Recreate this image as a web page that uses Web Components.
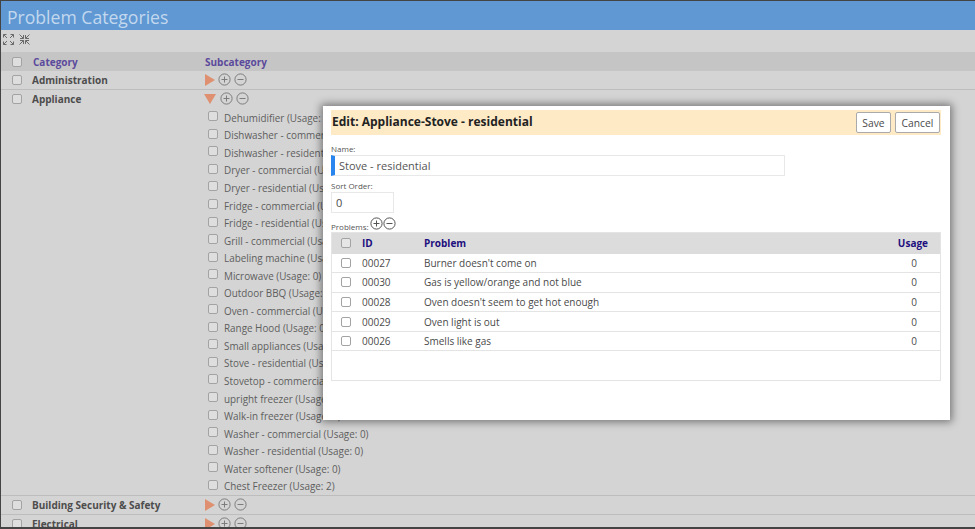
<!DOCTYPE html>
<html>
<head>
<meta charset="utf-8">
<title>Problem Categories</title>
<style>
    html, body { margin: 0; height: 100%; overflow: hidden; background: #d4d4d4; }
    body { font-family: "Open Sans", "Liberation Sans", sans-serif; color: #555; }
</style>
</head>
<body>
<category-page>
    <cat-row name="Administration"></cat-row>
    <cat-row name="Appliance" open>
        <sub-item>Dehumidifier (Usage: 0)</sub-item>
        <sub-item>Dishwasher - commercial (Usage: 0)</sub-item>
        <sub-item>Dishwasher - residential (Usage: 0)</sub-item>
        <sub-item>Dryer - commercial (Usage: 0)</sub-item>
        <sub-item>Dryer - residential (Usage: 0)</sub-item>
        <sub-item>Fridge - commercial (Usage: 0)</sub-item>
        <sub-item>Fridge - residential (Usage: 0)</sub-item>
        <sub-item>Grill - commercial (Usage: 0)</sub-item>
        <sub-item>Labeling machine (Usage: 0)</sub-item>
        <sub-item>Microwave (Usage: 0)</sub-item>
        <sub-item>Outdoor BBQ (Usage: 0)</sub-item>
        <sub-item>Oven - commercial (Usage: 0)</sub-item>
        <sub-item>Range Hood (Usage: 0)</sub-item>
        <sub-item>Small appliances (Usage: 0)</sub-item>
        <sub-item>Stove - residential (Usage: 0)</sub-item>
        <sub-item>Stovetop - commercial (Usage: 0)</sub-item>
        <sub-item>upright freezer (Usage: 0)</sub-item>
        <sub-item>Walk-in freezer (Usage: 0)</sub-item>
        <sub-item>Washer - commercial (Usage: 0)</sub-item>
        <sub-item>Washer - residential (Usage: 0)</sub-item>
        <sub-item>Water softener (Usage: 0)</sub-item>
        <sub-item>Chest Freezer (Usage: 2)</sub-item>
    </cat-row>
    <cat-row name="Building Security &amp; Safety"></cat-row>
    <cat-row name="Electrical"></cat-row>
</category-page>
<edit-dialog title-text="Edit: Appliance-Stove - residential">
    <problem-row code="00027" usage="0">Burner doesn't come on</problem-row>
    <problem-row code="00030" usage="0">Gas is yellow/orange and not blue</problem-row>
    <problem-row code="00028" usage="0">Oven doesn't seem to get hot enough</problem-row>
    <problem-row code="00029" usage="0">Oven light is out</problem-row>
    <problem-row code="00026" usage="0">Smells like gas</problem-row>
</edit-dialog>

<script>
const CHECK_CSS = `
    .check {
        display: block;
        box-sizing: border-box;
        width: 10px;
        height: 10px;
        border: 1px solid #a3a3a3;
        border-radius: 2px;
        background: #dedede;
        flex: none;
    }
`;

class RoundIcon extends HTMLElement {
    connectedCallback() {
        const minus = this.getAttribute('type') === 'minus';
        const color = this.getAttribute('color') || '#7c7c7c';
        this.attachShadow({ mode: 'open' });
        this.shadowRoot.innerHTML = `
            <style>
                :host { display: block; width: 13px; height: 13px; flex: none; }
                svg { display: block; }
            </style>
            <svg width="13" height="13" viewBox="0 0 13 13" fill="none" stroke="${color}" stroke-width="1">
                <circle cx="6.5" cy="6.5" r="5.6"/>
                <path d="M3.5 6.5h6${minus ? '' : 'M6.5 3.5v6'}"/>
            </svg>
        `;
    }
}

class CategoryPage extends HTMLElement {
    connectedCallback() {
        this.attachShadow({ mode: 'open' });
        this.shadowRoot.innerHTML = `
            <style>
                :host {
                    display: block;
                    box-sizing: border-box;
                    height: 529px;
                    overflow: hidden;
                    border: solid #444;
                    border-width: 1px 0 2px 1px;
                }
                .title {
                    box-sizing: border-box;
                    height: 29px;
                    background: #5f98d2;
                    color: #c3d8ef;
                    font-size: 17.6px;
                    line-height: 29px;
                    padding: 2px 0 0 6px;
                    overflow: hidden;
                }
                .tools {
                    height: 22px;
                    display: flex;
                    align-items: center;
                    gap: 5px;
                    padding: 0 0 3px 2px;
                    box-sizing: border-box;
                }
                .head {
                    height: 19px;
                    background: #c5c5c5;
                    display: flex;
                    align-items: center;
                    font-size: 10px;
                    font-weight: 700;
                    color: #5b4a9c;
                }
                ${CHECK_CSS}
                .head .check { margin-left: 11px; }
                .head .cat { margin-left: 11px; width: 172px; }
            </style>
            <div class="title">Problem Categories</div>
            <div class="tools">
                <svg width="11" height="11" viewBox="0 0 11 11" fill="none" stroke="#6a6a6a" stroke-width="1">
                    <path d="M.5 3.500v-3h3M.5.500l3.500 3.500M7.500.5h3v3M10.500.500L7 4M.5 7.500v3h3M.5 10.500L4 7M7.500 10.500h3v-3M10.500 10.500L7 7"/>
                </svg>
                <svg width="11" height="11" viewBox="0 0 11 11" fill="none" stroke="#6a6a6a" stroke-width="1">
                    <path d="M1 4.500h3.500V1M.5.500l4 4M6.500 1v3.500H10M10.500.500l-4 4M1 6.500h3.500V10M.5 10.500l4-4M10 6.500H6.500V10M10.500 10.500l-4-4"/>
                </svg>
            </div>
            <div class="head">
                <span class="check"></span>
                <span class="cat">Category</span>
                <span>Subcategory</span>
            </div>
            <slot></slot>
        `;
    }
}

class CatRow extends HTMLElement {
    connectedCallback() {
        const open = this.hasAttribute('open');
        this.attachShadow({ mode: 'open' });
        this.shadowRoot.innerHTML = `
            <style>
                :host { display: block; border-bottom: 1px solid #bdbdbd; }
                .line {
                    display: flex;
                    align-items: center;
                    height: 18px;
                }
                ${CHECK_CSS}
                .check { margin-left: 11px; }
                .name {
                    margin-left: 10px;
                    width: 173px;
                    font-size: 10px;
                    font-weight: 700;
                    color: #4d4d4d;
                    white-space: nowrap;
                }
                .arrow { width: 0; height: 0; }
                .arrow.right {
                    border-left: 10px solid #de9070;
                    border-top: 6px solid transparent;
                    border-bottom: 6px solid transparent;
                }
                .arrow.down {
                    margin: 0 1px 0 -1px;
                    border-top: 10px solid #de9070;
                    border-left: 6.500px solid transparent;
                    border-right: 6.500px solid transparent;
                }
                .icons { display: flex; align-items: center; gap: 3px; margin-top: -1px; }
                .subs { padding: 1px 0 0 207px; }
            </style>
            <div class="line">
                <span class="check"></span>
                <span class="name">${this.getAttribute('name').replace('&', '&amp;')}</span>
                <span class="icons">
                    <span class="arrow ${open ? 'down' : 'right'}"></span>
                    <round-icon type="plus"></round-icon>
                    <round-icon type="minus"></round-icon>
                </span>
            </div>
            ${open ? '<div class="subs"><slot></slot></div>' : ''}
        `;
    }
}

class SubItem extends HTMLElement {
    connectedCallback() {
        this.attachShadow({ mode: 'open' });
        this.shadowRoot.innerHTML = `
            <style>
                :host {
                    display: flex;
                    align-items: center;
                    gap: 6px;
                    height: 17.55px;
                    font-size: 9.9px;
                    color: #5e5e5e;
                    white-space: nowrap;
                }
                ${CHECK_CSS}
                .check { margin-top: -3px; }
            </style>
            <span class="check"></span>
            <span><slot></slot></span>
        `;
    }
}

class ProblemRow extends HTMLElement {
    connectedCallback() {
        this.attachShadow({ mode: 'open' });
        this.shadowRoot.innerHTML = `
            <style>
                :host {
                    display: flex;
                    align-items: center;
                    box-sizing: border-box;
                    height: 19.6px;
                    border-bottom: 1px solid #e4e4e4;
                    font-size: 10px;
                    color: #4a4a4a;
                }
                ${CHECK_CSS}
                .check { margin-left: 9px; background: #fff; }
                .code { margin-left: 11px; width: 62px; }
                .text { flex: 1; }
                .usage { width: 40px; margin-right: 6px; text-align: center; }
            </style>
            <span class="check"></span>
            <span class="code">${this.getAttribute('code')}</span>
            <span class="text"><slot></slot></span>
            <span class="usage">${this.getAttribute('usage')}</span>
        `;
    }
}

class EditDialog extends HTMLElement {
    connectedCallback() {
        this.attachShadow({ mode: 'open' });
        this.shadowRoot.innerHTML = `
            <style>
                :host {
                    position: absolute;
                    left: 323px;
                    top: 106px;
                    width: 627px;
                    height: 314px;
                    box-sizing: border-box;
                    padding: 4px 9px 0 8px;
                    background: #fff;
                    box-shadow: 0 0 8px 2px rgba(0, 0, 0, 0.45);
                    font-size: 10px;
                    color: #4a4a4a;
                }
                .bar {
                    height: 25px;
                    background: #ffeac6;
                    display: flex;
                    align-items: center;
                    justify-content: space-between;
                    padding: 0 1px 0 1px;
                }
                .bar b { font-size: 12px; color: #222; position: relative; top: -1px; }
                .btns { display: flex; gap: 4px; }
                .btn {
                    box-sizing: border-box;
                    height: 21px;
                    text-align: center;
                    border: 1px solid #aaa;
                    border-radius: 2px;
                    background: #fff;
                    font-size: 10.3px;
                    line-height: 20px;
                    color: #4a4a4a;
                }
                .save { width: 35px; }
                .cancel { width: 45px; }
                label { display: block; font-size: 8px; color: #555; line-height: 10px; }
                .name-label { margin-top: 9px; }
                .name {
                    box-sizing: border-box;
                    width: 454px;
                    height: 21px;
                    margin-top: 1px;
                    border: 1px solid #e8e8e8;
                    border-left: 4px solid #2a86ee;
                    padding-left: 4px;
                    font-size: 11px;
                    line-height: 20px;
                    color: #555;
                }
                .sort-label { margin-top: 5px; }
                .sort {
                    box-sizing: border-box;
                    width: 63px;
                    height: 21px;
                    margin-top: 1px;
                    border: 1px solid #e8e8e8;
                    padding-left: 4px;
                    font-size: 11px;
                    line-height: 19px;
                }
                .prob-label { display: flex; align-items: flex-end; margin-top: 3px; height: 16px; }
                .prob-label label { margin-right: 1px; }
                .prob-label round-icon { margin-bottom: 2px; }
                .table {
                    box-sizing: border-box;
                    width: 610px;
                    height: 149px;
                    border: 1px solid #e4e4e4;
                }
                .thead {
                    height: 20.5px;
                    background: #dcdcdc;
                    display: flex;
                    align-items: center;
                    font-size: 10px;
                    font-weight: 700;
                    color: #1d0f7e;
                }
                ${CHECK_CSS}
                .thead .check { margin-left: 9px; background: #e6e6e6; }
                .thead .id { margin-left: 11px; width: 62px; }
                .thead .problem { flex: 1; }
                .thead .usage { margin-right: 12px; }
            </style>
            <div class="bar">
                <b>${this.getAttribute('title-text')}</b>
                <div class="btns">
                    <span class="btn save">Save</span>
                    <span class="btn cancel">Cancel</span>
                </div>
            </div>
            <label class="name-label">Name:</label>
            <div class="name">Stove - residential</div>
            <label class="sort-label">Sort Order:</label>
            <div class="sort">0</div>
            <div class="prob-label">
                <label>Problems:</label>
                <round-icon type="plus" color="#555"></round-icon>
                <round-icon type="minus" color="#555"></round-icon>
            </div>
            <div class="table">
                <div class="thead">
                    <span class="check"></span>
                    <span class="id">ID</span>
                    <span class="problem">Problem</span>
                    <span class="usage">Usage</span>
                </div>
                <slot></slot>
            </div>
        `;
    }
}

customElements.define('round-icon', RoundIcon);
customElements.define('category-page', CategoryPage);
customElements.define('cat-row', CatRow);
customElements.define('sub-item', SubItem);
customElements.define('problem-row', ProblemRow);
customElements.define('edit-dialog', EditDialog);
</script>
</body>
</html>
